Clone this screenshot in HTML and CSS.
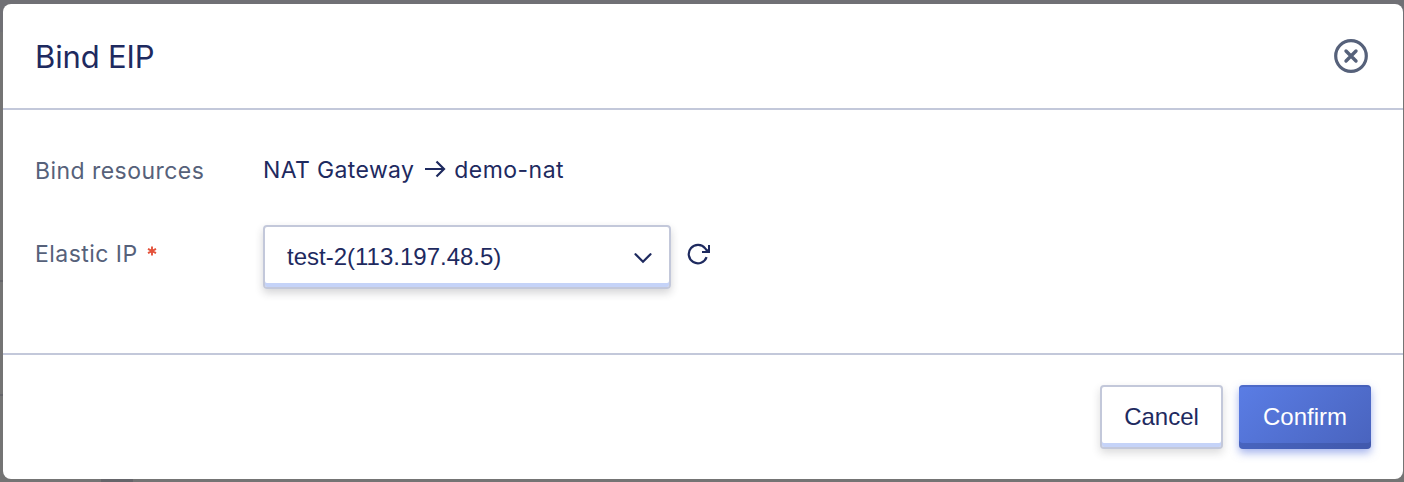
FILE: index.html
```html
<!DOCTYPE html>
<html lang="en">
<head>
<meta charset="utf-8">
<title>Bind EIP</title>
<link rel="stylesheet" href="styles.css">
</head>
<body>
<div class="tick tick-left-top"></div>
<div class="tick tick-left-mid"></div>
<div class="tick tick-left"></div>
<div class="tick tick-bottom"></div>
<section class="modal" role="dialog">
  <header class="modal-header">
    <h1 class="title">Bind EIP</h1>
    <svg class="close" width="34" height="34" viewBox="0 0 34 34"><circle cx="17" cy="17" r="15.300"/><path class="cross" d="M12 12l10 10M22 12L12 22"/></svg>
  </header>
  <div class="modal-body">
    <div class="row row-resources">
      <div class="label">Bind resources</div>
      <div class="value"><span class="gateway">NAT Gateway</span><svg class="arrow" width="22" height="20" viewBox="0 0 22 20"><path d="M1 10h19M12.500 2.500L20 10l-7.500 7.500"/></svg><span class="demo">demo-nat</span></div>
    </div>
    <div class="row">
      <div class="label"><span class="elastic">Elastic IP</span><svg class="required" width="10" height="10" viewBox="0 0 10 10"><path d="M5 .5v9M1 2.800l8 4.400M9 2.800L1 7.200"/></svg></div>
      <div class="select"><span class="selected">test-2(113.197.48.5)</span><svg class="chevron" width="18" height="12" viewBox="0 0 18 12"><path d="M1.500 2.200L9 9.700l7.500-7.500"/></svg></div>
      <svg class="refresh" width="24" height="24" viewBox="0 0 24 24"><path d="M19.600 15.200A9.200 9.200 0 1 1 18.200 6.400L20 8.600"/><path class="fill" d="M21 3h2v8h-8V9h3.500L21 7z"/></svg>
    </div>
  </div>
  <footer class="modal-footer">
    <button class="btn cancel">Cancel</button>
    <button class="btn confirm">Confirm</button>
  </footer>
</section>
</body>
</html>
```
FILE: styles.css
```css
* { box-sizing: border-box; }
body { margin: 0; height: 482px; padding: 4px 1px 3px 3px; background: #747474; overflow: hidden; position: relative; font-family: Inter, "Liberation Sans", sans-serif; }
.tick { position: absolute; background: #65656a; }
.tick-left-top { left: 0; top: 0; width: 1404px; height: 32px; background: #707075; }
.tick-left-mid { left: 0; top: 280px; width: 3px; height: 2px; }
.tick-left { left: 0; top: 394px; width: 3px; height: 2px; }
.tick-bottom { left: 101px; top: 479px; width: 32px; height: 3px; }
.modal { position: relative; height: 475px; background: #fff; border-radius: 8px; color: #1e2a5f; display: flex; flex-direction: column; overflow: hidden; }
.modal-header { height: 106px; border-bottom: 2px solid #c3c8da; display: flex; align-items: center; justify-content: space-between; padding: 0 35px 0 32px; }
.title { margin: 0; padding-top: 2px; font-size: 31px; font-weight: 400; line-height: 40px; letter-spacing: -.15px; }
svg { flex: none; fill: none; stroke: currentColor; stroke-width: 2.2; }
.close { color: #56617a; stroke-width: 3.2; }
.cross { stroke-width: 3.4; stroke-linecap: round; }
.modal-body { height: 243px; padding: 43px 32px 0; font-size: 23px; }
.row { display: flex; }
.row-resources { height: 72px; }
.label { width: 228px; flex: none; color: #56617a; display: flex; line-height: 36px; letter-spacing: .45px; white-space: nowrap; }
.row:not(.row-resources) .label { padding-top: 11px; }
.value { display: flex; line-height: 34px; }
.gateway { letter-spacing: .37px; }
.demo { letter-spacing: .45px; }
.arrow { margin: 6px 8px 0 10px; }
.required { color: #e4523b; stroke-width: 1.9; margin: 10px 0 0 9px; }
.select { width: 408px; height: 64px; border: 2px solid #c3c8da; border-radius: 4px; box-shadow: inset 0 -4px #c5d3f8, 0 4px 8px rgba(40,40,50,.2); display: flex; align-items: center; justify-content: space-between; padding: 0 17px 0 22px; font: 24px "Liberation Sans", sans-serif; }
.chevron { margin-top: 1px; stroke-linecap: round; }
.refresh { margin: 17px 0 0 16px; }
.refresh .fill { fill: currentColor; stroke: none; }
.modal-footer { height: 126px; border-top: 2px solid #c3c8da; display: flex; justify-content: flex-end; gap: 16px; padding: 30px 32px 0; }
.btn { height: 64px; padding: 0; border: 2px solid #c3c8da; border-radius: 4px; font: 24px "Liberation Sans", sans-serif; }
.cancel { width: 123px; color: #1e2a5f; background: #fff; box-shadow: inset 0 -4px #c5d3f8, 0 4px 8px rgba(40,40,50,.17); }
.confirm { width: 132px; color: #fff; border-width: 0; background: linear-gradient(135deg, #5a7de5, #4963bd); box-shadow: inset 0 -6px rgba(50,70,140,.35), inset 0 2px rgba(55,75,155,.35), 0 4px 8px rgba(75,105,220,.5); }
```
